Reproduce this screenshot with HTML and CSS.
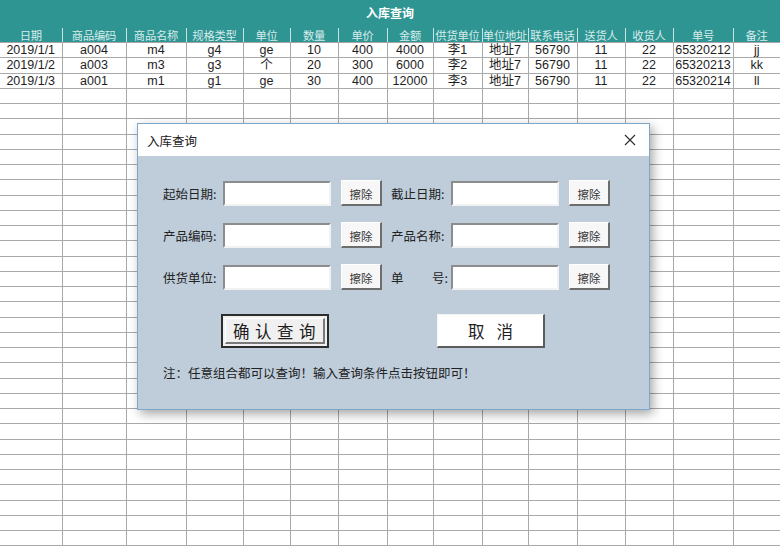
FILE: index.html
```html
<!DOCTYPE html>
<html lang="zh-CN">
<head>
<meta charset="utf-8">
<title>入库查询</title>
<link rel="stylesheet" href="styles.css">
</head>
<body>
<div class="sheet">
  <div class="sheet-title">入库查询</div>
  <table class="grid">
    <colgroup>
      <col style="width:62px"><col style="width:64px"><col style="width:60px"><col style="width:57px"><col style="width:47px"><col style="width:48px"><col style="width:49px"><col style="width:46px"><col style="width:49px"><col style="width:46px"><col style="width:49px"><col style="width:48px"><col style="width:48px"><col style="width:60px"><col style="width:47px">
    </colgroup>
    <thead>
      <tr class="hd"><th>日期</th><th>商品编码</th><th>商品名称</th><th>规格类型</th><th>单位</th><th>数量</th><th>单价</th><th>金额</th><th>供货单位</th><th>单位地址</th><th>联系电话</th><th>送货人</th><th>收货人</th><th>单号</th><th>备注</th></tr>
    </thead>
    <tbody>
      <tr><td>2019/1/1</td><td>a004</td><td>m4</td><td>g4</td><td>ge</td><td>10</td><td>400</td><td>4000</td><td>李1</td><td>地址7</td><td>56790</td><td>11</td><td>22</td><td>65320212</td><td>jj</td></tr>
      <tr><td>2019/1/2</td><td>a003</td><td>m3</td><td>g3</td><td>个</td><td>20</td><td>300</td><td>6000</td><td>李2</td><td>地址7</td><td>56790</td><td>11</td><td>22</td><td>65320213</td><td>kk</td></tr>
      <tr><td>2019/1/3</td><td>a001</td><td>m1</td><td>g1</td><td>ge</td><td>30</td><td>400</td><td>12000</td><td>李3</td><td>地址7</td><td>56790</td><td>11</td><td>22</td><td>65320214</td><td>ll</td></tr>
      <tr><td></td><td></td><td></td><td></td><td></td><td></td><td></td><td></td><td></td><td></td><td></td><td></td><td></td><td></td><td></td></tr>
      <tr><td></td><td></td><td></td><td></td><td></td><td></td><td></td><td></td><td></td><td></td><td></td><td></td><td></td><td></td><td></td></tr>
      <tr><td></td><td></td><td></td><td></td><td></td><td></td><td></td><td></td><td></td><td></td><td></td><td></td><td></td><td></td><td></td></tr>
      <tr><td></td><td></td><td></td><td></td><td></td><td></td><td></td><td></td><td></td><td></td><td></td><td></td><td></td><td></td><td></td></tr>
      <tr><td></td><td></td><td></td><td></td><td></td><td></td><td></td><td></td><td></td><td></td><td></td><td></td><td></td><td></td><td></td></tr>
      <tr><td></td><td></td><td></td><td></td><td></td><td></td><td></td><td></td><td></td><td></td><td></td><td></td><td></td><td></td><td></td></tr>
      <tr><td></td><td></td><td></td><td></td><td></td><td></td><td></td><td></td><td></td><td></td><td></td><td></td><td></td><td></td><td></td></tr>
      <tr><td></td><td></td><td></td><td></td><td></td><td></td><td></td><td></td><td></td><td></td><td></td><td></td><td></td><td></td><td></td></tr>
      <tr><td></td><td></td><td></td><td></td><td></td><td></td><td></td><td></td><td></td><td></td><td></td><td></td><td></td><td></td><td></td></tr>
      <tr><td></td><td></td><td></td><td></td><td></td><td></td><td></td><td></td><td></td><td></td><td></td><td></td><td></td><td></td><td></td></tr>
      <tr><td></td><td></td><td></td><td></td><td></td><td></td><td></td><td></td><td></td><td></td><td></td><td></td><td></td><td></td><td></td></tr>
      <tr><td></td><td></td><td></td><td></td><td></td><td></td><td></td><td></td><td></td><td></td><td></td><td></td><td></td><td></td><td></td></tr>
      <tr><td></td><td></td><td></td><td></td><td></td><td></td><td></td><td></td><td></td><td></td><td></td><td></td><td></td><td></td><td></td></tr>
      <tr><td></td><td></td><td></td><td></td><td></td><td></td><td></td><td></td><td></td><td></td><td></td><td></td><td></td><td></td><td></td></tr>
      <tr><td></td><td></td><td></td><td></td><td></td><td></td><td></td><td></td><td></td><td></td><td></td><td></td><td></td><td></td><td></td></tr>
      <tr><td></td><td></td><td></td><td></td><td></td><td></td><td></td><td></td><td></td><td></td><td></td><td></td><td></td><td></td><td></td></tr>
      <tr><td></td><td></td><td></td><td></td><td></td><td></td><td></td><td></td><td></td><td></td><td></td><td></td><td></td><td></td><td></td></tr>
      <tr><td></td><td></td><td></td><td></td><td></td><td></td><td></td><td></td><td></td><td></td><td></td><td></td><td></td><td></td><td></td></tr>
      <tr><td></td><td></td><td></td><td></td><td></td><td></td><td></td><td></td><td></td><td></td><td></td><td></td><td></td><td></td><td></td></tr>
      <tr><td></td><td></td><td></td><td></td><td></td><td></td><td></td><td></td><td></td><td></td><td></td><td></td><td></td><td></td><td></td></tr>
      <tr><td></td><td></td><td></td><td></td><td></td><td></td><td></td><td></td><td></td><td></td><td></td><td></td><td></td><td></td><td></td></tr>
      <tr><td></td><td></td><td></td><td></td><td></td><td></td><td></td><td></td><td></td><td></td><td></td><td></td><td></td><td></td><td></td></tr>
      <tr><td></td><td></td><td></td><td></td><td></td><td></td><td></td><td></td><td></td><td></td><td></td><td></td><td></td><td></td><td></td></tr>
      <tr><td></td><td></td><td></td><td></td><td></td><td></td><td></td><td></td><td></td><td></td><td></td><td></td><td></td><td></td><td></td></tr>
      <tr><td></td><td></td><td></td><td></td><td></td><td></td><td></td><td></td><td></td><td></td><td></td><td></td><td></td><td></td><td></td></tr>
      <tr><td></td><td></td><td></td><td></td><td></td><td></td><td></td><td></td><td></td><td></td><td></td><td></td><td></td><td></td><td></td></tr>
      <tr><td></td><td></td><td></td><td></td><td></td><td></td><td></td><td></td><td></td><td></td><td></td><td></td><td></td><td></td><td></td></tr>
      <tr><td></td><td></td><td></td><td></td><td></td><td></td><td></td><td></td><td></td><td></td><td></td><td></td><td></td><td></td><td></td></tr>
      <tr><td></td><td></td><td></td><td></td><td></td><td></td><td></td><td></td><td></td><td></td><td></td><td></td><td></td><td></td><td></td></tr>
      <tr><td></td><td></td><td></td><td></td><td></td><td></td><td></td><td></td><td></td><td></td><td></td><td></td><td></td><td></td><td></td></tr>
    </tbody>
  </table>
</div>

<div class="dialog">
  <div class="dlg-title">
    <span>入库查询</span>
    <svg class="close" width="12" height="12" viewBox="0 0 12 12"><path d="M1 1 L11 11 M11 1 L1 11" stroke="#2b2b2b" stroke-width="1.1" fill="none"/></svg>
  </div>
  <div class="dlg-body">
    <div class="frow">
      <div class="grp"><span class="lbl">起始日期:</span><span class="inp"></span><span class="clr">擦除</span></div>
      <div class="grp"><span class="lbl">截止日期:</span><span class="inp"></span><span class="clr">擦除</span></div>
    </div>
    <div class="frow">
      <div class="grp"><span class="lbl">产品编码:</span><span class="inp"></span><span class="clr">擦除</span></div>
      <div class="grp"><span class="lbl">产品名称:</span><span class="inp"></span><span class="clr">擦除</span></div>
    </div>
    <div class="frow">
      <div class="grp"><span class="lbl">供货单位:</span><span class="inp"></span><span class="clr">擦除</span></div>
      <div class="grp"><span class="lbl split"><span>单</span><span>号:</span></span><span class="inp"></span><span class="clr">擦除</span></div>
    </div>
    <div class="actions">
      <div class="btn-ok"><span>确认查询</span></div>
      <div class="btn-cancel"><span>取消</span></div>
    </div>
    <div class="note">注：任意组合都可以查询！输入查询条件点击按钮即可！</div>
  </div>
</div>
</body>
</html>
```

FILE: styles.css
```css
html, body {
  margin: 0;
  padding: 0;
  background: #ffffff;
  font-family: "Noto Sans CJK SC", "Noto Sans", sans-serif;
  color: #222;
  overflow: hidden;
}

.sheet {
  width: 780px;
}

.sheet-title {
  height: 28px;
  background: #2f9593;
  color: #ffffff;
  font-weight: bold;
  font-size: 12px;
  line-height: 26px;
  text-align: center;
}

.grid {
  width: 780px;
  table-layout: fixed;
  border-collapse: collapse;
  font-family: "Liberation Sans", "Noto Sans CJK SC", sans-serif;
  font-size: 12.5px;
}

.grid th,
.grid td {
  padding: 0;
  text-align: center;
  white-space: nowrap;
}

.grid .hd th {
  height: 14px;
  background: #2f9593;
  color: #d6eceb;
  font-family: "Noto Sans CJK SC", sans-serif;
  font-weight: normal;
  font-size: 11.3px;
  line-height: 13px;
  letter-spacing: -0.2px;
  border-left: 1px solid #c9e3e2;
  border-right: 1px solid #c9e3e2;
  border-bottom: 1px solid #a6a6a6;
}

.grid .hd th:first-child { border-left: none; }

.grid td {
  height: 14.25px;
  line-height: 14px;
  color: #1e1e1e;
  border: 1px solid #a9a9a9;
}

.grid td:first-child { border-left: none; }
.grid td:last-child { border-right: none; }

/* dialog window */
.dialog {
  position: absolute;
  left: 137px;
  top: 123px;
  width: 511px;
  height: 285px;
  border: 1px solid #7fa6cc;
  background: #bfcddb;
  box-shadow: 3px 4px 10px rgba(0, 0, 0, 0.35);
  display: flex;
  flex-direction: column;
}

.dlg-title {
  height: 32px;
  background: #ffffff;
  display: flex;
  align-items: center;
  justify-content: space-between;
  padding: 0 13px 0 9px;
  font-size: 12.5px;
  color: #222;
}

.close {
  display: block;
}

.dlg-body {
  flex: 1;
  padding: 24px 0 0 25px;
  display: flex;
  flex-direction: column;
}

.frow {
  display: flex;
  height: 26px;
  margin-bottom: 16px;
}

.grp {
  display: flex;
  align-items: center;
}

.grp + .grp {
  margin-left: 9px;
}

.lbl {
  width: 59px;
  margin-right: 1px;
  font-size: 12.5px;
  color: #222;
  white-space: nowrap;
}

.lbl.split {
  display: flex;
  justify-content: space-between;
  padding-right: 2px;
  width: 57px;
}

.inp {
  box-sizing: border-box;
  width: 108px;
  height: 25px;
  background: #ffffff;
  border-top: 2px solid #8c8c8c;
  border-left: 2px solid #8c8c8c;
  border-bottom: 2px solid #f2f2f2;
  border-right: 2px solid #f2f2f2;
}

.clr {
  box-sizing: border-box;
  margin-left: 10px;
  width: 41px;
  height: 26px;
  background: #f7f7f7;
  border-top: 1px solid #ffffff;
  border-left: 1px solid #ffffff;
  border-bottom: 2px solid #6d6d6d;
  border-right: 2px solid #6d6d6d;
  font-size: 11.5px;
  color: #333;
  display: flex;
  align-items: center;
  justify-content: center;
  padding-top: 3px;
}

.actions {
  display: flex;
  margin-top: 8px;
  padding-left: 58px;
}

.btn-ok {
  box-sizing: border-box;
  width: 108px;
  height: 34px;
  border: 2px solid #2d2d2d;
  background: #f0f0f0;
  display: flex;
  padding: 2px;
}

.btn-ok span {
  flex: 1;
  border-top: 1px solid #ffffff;
  border-left: 1px solid #ffffff;
  border-bottom: 2px solid #7a7a7a;
  border-right: 2px solid #7a7a7a;
  display: flex;
  align-items: center;
  justify-content: center;
  font-size: 16.5px;
  letter-spacing: 5.5px;
  padding-left: 5px;
  color: #1d1d1d;
}

.btn-cancel {
  box-sizing: border-box;
  margin-left: 108px;
  width: 108px;
  height: 34px;
  background: #ffffff;
  border-top: 1px solid #f4f4f4;
  border-left: 1px solid #f4f4f4;
  border-bottom: 2px solid #5c5c5c;
  border-right: 2px solid #5c5c5c;
  display: flex;
  align-items: center;
  justify-content: center;
  font-size: 16.5px;
  letter-spacing: 12px;
  padding-left: 12px;
  color: #1d1d1d;
}

.note {
  margin-top: 15px;
  font-size: 12.5px;
  color: #222;
}
```
